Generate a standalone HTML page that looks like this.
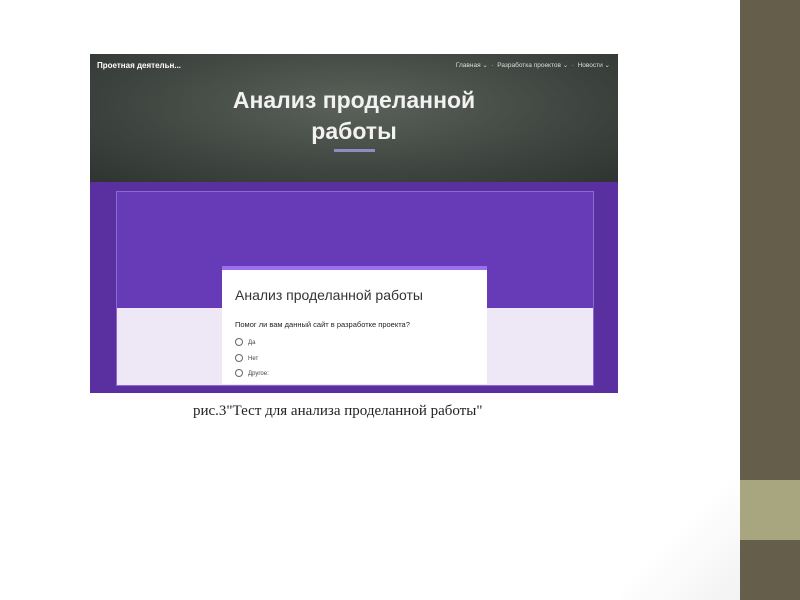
<!DOCTYPE html>
<html><head><meta charset="utf-8"><style>
body{margin:0;width:800px;height:600px;position:relative;overflow:hidden;background:#fff;font-family:"Liberation Sans",sans-serif}
.col{position:absolute;left:740px;top:0;width:60px;height:600px;background:#655e4a}
.tan{position:absolute;left:740px;top:480px;width:60px;height:60px;background:#a8a67e}
.shade{position:absolute;left:620px;top:420px;width:120px;height:180px;background:linear-gradient(135deg,rgba(255,255,255,0) 55%,rgba(0,0,0,0.05))}
.img{position:absolute;left:90px;top:54px;width:528px;height:339px;overflow:hidden}
.hdr{position:absolute;left:0;top:0;width:528px;height:128px;background:radial-gradient(ellipse at 50% 40%,#5b625a,#3f4540 60%,#2f3430)}
.purp{position:absolute;left:0;top:128px;width:528px;height:211px;background:#5a2fa0}
.card{position:absolute;left:26px;top:137px;width:476px;height:193px;background:#673ab7;border:1px solid #8c6ad0}
.lav{position:absolute;left:0;top:116px;width:476px;height:77px;background:#ede7f6}
.form{position:absolute;left:132px;top:212px;width:265px;height:118px;background:#fff;border-top:4px solid #9a6ff0;box-sizing:border-box}
.t{position:absolute;color:#fff;font-weight:bold}
</style></head><body>
<div class="shade"></div>
<div class="col"></div><div class="tan"></div>
<div class="img">
 <div class="hdr">
  <div class="t" style="left:7px;top:7px;font-size:8px">Проетная деятельн...</div>
  <div style="position:absolute;right:8px;top:7px;font-size:6.5px;color:#ddd">Главная ⌄ &nbsp;·&nbsp; Разработка проектов ⌄ &nbsp;·&nbsp; Новости ⌄</div>
  <div class="t" style="left:0;width:528px;text-align:center;top:31px;font-size:23px;line-height:31px;color:#f2f2f2">Анализ проделанной<br>работы</div>
  <div style="position:absolute;left:244px;top:95px;width:41px;height:3px;background:#8a8fc0"></div>
 </div>
 <div class="purp"></div>
 <div class="card"><div class="lav"></div></div>
 <div class="form">
  <div style="position:absolute;left:13px;top:17px;font-size:14px;color:#333">Анализ проделанной работы</div>
  <div style="position:absolute;left:13px;top:50px;font-size:7.5px;color:#222">Помог ли вам данный сайт в разработке проекта?</div>
  <div style="position:absolute;left:13px;top:66px;font-size:6px;color:#444;line-height:15.5px">
   <div><span style="display:inline-block;width:6px;height:6px;border:1px solid #666;border-radius:50%;vertical-align:middle;margin-right:5px"></span>Да</div>
   <div><span style="display:inline-block;width:6px;height:6px;border:1px solid #666;border-radius:50%;vertical-align:middle;margin-right:5px"></span>Нет</div>
   <div><span style="display:inline-block;width:6px;height:6px;border:1px solid #666;border-radius:50%;vertical-align:middle;margin-right:5px"></span>Другое:</div>
  </div>
 </div>
</div>
<div style="position:absolute;left:193px;top:403px;font-family:'Liberation Serif',serif;font-size:15px;color:#222">рис.3"Тест для анализа проделанной работы"</div>
</body></html>
